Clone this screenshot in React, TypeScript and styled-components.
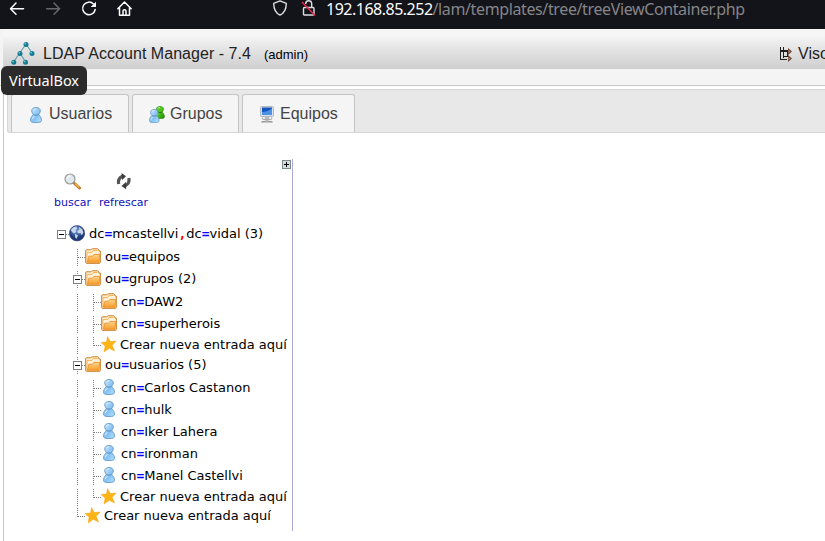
import React from "react";
import styled, { createGlobalStyle } from "styled-components";

const GlobalStyle = createGlobalStyle`
  * { box-sizing: border-box; }
  body { margin: 0; background: #fff; overflow: hidden; font-family: "Liberation Sans", Arial, sans-serif; }
  svg { display: block; flex: none; }
`;

const Page = styled.div`
  width: 825px;
  height: 541px;
  overflow: hidden;
  position: relative;
  background: #fff;
`;

const BrowserBar = styled.div`
  height: 29px;
  background: #131419;
  display: flex;
  align-items: flex-start;
  padding-left: 8px;
  color: #fbfbfe;
`;

const BarIcon = styled.div<{ $gap: number }>`
  margin-right: ${(p) => p.$gap}px;
`;

const Address = styled.div`
  display: flex;
  font: 16px/19px "Noto Sans", sans-serif;
  white-space: nowrap;
`;
const Host = styled.span`
  letter-spacing: -0.5px;
`;
const Path = styled.span`
  color: #858589;
  letter-spacing: -0.38px;
`;

const Header = styled.header`
  height: 57px;
  background: #f4f4f4;
  border-bottom: 1px solid #c6c6c6;
  padding-left: 3px;
`;
const HeaderBar = styled.div`
  height: 40px;
  background: linear-gradient(#f6f6f6 15%, #e4e4e4 50%, #cfcfcf);
  display: flex;
  align-items: center;
  padding: 9px 0 0 8px;
  color: #222;
  font-size: 16px;
  white-space: nowrap;
`;
const Title = styled.span`
  margin-left: 8px;
  width: 221px;
  letter-spacing: 0.04px;
`;
const Account = styled.span`
  font-size: 13px;
  color: #000;
  flex: 1;
  padding-top: 2px;
`;
const TreeLink = styled.span`
  width: 47px;
  display: flex;
  align-items: center;
  gap: 5px;
`;

const Main = styled.main`
  margin-left: 3px;
  height: 455px;
  border-left: 1px solid #c8c8c8;
  padding: 3px 0 0 3px;
`;
const Tabs = styled.nav`
  height: 44px;
  background: #e8e8e8;
  border: 1px solid #d6d6d6;
  border-right: 0;
  border-radius: 3px 0 0 3px;
  display: flex;
  align-items: flex-end;
  gap: 3px;
  padding-left: 3px;
`;
const Tab = styled.div<{ $width: number }>`
  width: ${(p) => p.$width}px;
  height: 38px;
  border: 1px solid #c4c4c4;
  border-bottom: 0;
  border-radius: 3px 3px 0 0;
  background: #f5f5f5;
  color: #444;
  font-size: 16px;
  display: flex;
  align-items: center;
  gap: 5px;
  padding-left: 16px;
`;
const TabIcon = styled.span`
  padding-top: 2px;
`;

const TreePanel = styled.section`
  width: 286px;
  height: 372px;
  margin-top: 26px;
  border-right: 1px solid #aaaad2;
  font-family: "DejaVu Sans", sans-serif;
  font-size: 13px;
  color: #000;
`;
const PanelTop = styled.div`
  display: flex;
  justify-content: flex-end;
  padding: 1px 1px 0 0;
`;
const Tools = styled.div`
  display: flex;
  gap: 8px;
  padding-left: 47px;
  margin-top: 4px;
  height: 50px;
`;
const Tool = styled.div`
  display: flex;
  flex-direction: column;
  align-items: center;
  color: #1111b8;
  font-size: 11px;
  line-height: 15px;
  gap: 5px;
`;
const Row = styled.div<{ $height: number }>`
  display: flex;
  height: ${(p) => p.$height}px;
  padding-left: 46px;
  white-space: nowrap;
`;
const Label = styled.span<{ $link?: boolean }>`
  line-height: 22px;
  height: 22px;
  margin-left: ${(p) => (p.$link ? 3 : 4)}px;
`;
const Equals = styled.span`
  color: #0000ff;
  font-family: "DejaVu Sans Mono", monospace;
  font-weight: bold;
  line-height: 1;
`;
const Comma = styled(Equals)`
  color: #ff0000;
`;
const IconSlot = styled.span`
  padding-top: 2px;
`;

const Tooltip = styled.div`
  position: absolute;
  left: 1px;
  top: 66px;
  width: 86px;
  height: 29px;
  border-radius: 6px;
  background: #2b2b2b;
  color: #fff;
  font: 14.5px/29px "Noto Sans", sans-serif;
  text-align: center;
`;

const User = ({ size = 16, green = false }: { size?: number; green?: boolean }) => (
  <svg width={size} height={size} viewBox="0 0 16 16">
    <defs>
      <linearGradient id={green ? "ug" : "ub"} x1="0" y1="0" x2="1" y2="1">
        <stop offset="0" stopColor={green ? "#78df37" : "#d4ecff"} />
        <stop offset=".55" stopColor={green ? "#43bd13" : "#85c1f2"} />
        <stop offset="1" stopColor={green ? "#238500" : "#b6e2ff"} />
      </linearGradient>
    </defs>
    <path
      d="M8 .5C5.400.5 3.700 1.700 3.700 3.800C3.700 5.600 5 6.700 5.200 7.400C5.200 8.400 2.500 9.400 2.500 13.200C2.500 15 4.300 15.600 8 15.600S13.500 15 13.500 13.200C13.500 9.400 10.800 8.400 10.800 7.400C11 6.700 12.300 5.600 12.300 3.800C12.300 1.700 10.600.5 8 .5Z"
      fill={`url(#${green ? "ug" : "ub"})`}
      stroke={green ? "#37901c" : "#6298c7"}
      strokeWidth=".9"
    />
    <path d="M5.400 7.500Q8 8.700 10.600 7.500" fill="none" stroke={green ? "#237a0b" : "#5c94c6"} strokeWidth="1.200" />
    <path d="M4.200 12Q4.800 10 6.400 9.600M5.400 2.800Q6.300 1.700 8 1.900" fill="none" stroke="#fff" strokeOpacity=".6" />
  </svg>
);

const Group = () => (
  <svg width="16" height="17" viewBox="0 0 16 17">
    <svg x="5" y="0" width="12" height="13" viewBox="1 0 14 16"><User green /></svg>
    <svg x="-1" y="3" width="12.500" height="14" viewBox="1 0 14 16"><User /></svg>
  </svg>
);

const Computer = () => (
  <svg width="16" height="17" viewBox="0 0 16 17">
    <rect x="1.500" y=".5" width="13" height="10" rx=".8" fill="#dce1e8" stroke="#b3b8c2" />
    <rect x="3" y="1.500" width="10" height="7.500" fill="#1655bd" />
    <path d="M3 6Q8 6.500 13 2.500V9H3Z" fill="#4d91e6" />
    <path d="M6 11H10L10.500 13H5.500Z" fill="#bbb" />
    <path d="M3.500 11.500Q2 13.500 5 13.500H11Q14 13.500 12.500 11.500" fill="none" stroke="#aaa" />
    <path d="M2.500 16Q8 13.500 13.500 16Z" fill="#ddd" stroke="#888" strokeWidth=".8" />
  </svg>
);

const Folder = () => (
  <svg width="16" height="17" viewBox="0 0 16 17">
    <defs>
      <linearGradient id="fold" x1="0" y1="0" x2="0" y2="1">
        <stop offset="0" stopColor="#ffd48b" />
        <stop offset="1" stopColor="#f69d29" />
      </linearGradient>
    </defs>
    <path d="M.7 14.200V2.800Q.7 1.800 1.500 1.800H5.500L6.500 1.300Q6.800.8 7.500.8H12.500Q13.300.8 13.500 1.500L14.200 3H15.300V14.200Q15.300 15.300 14.200 15.300H1.800Q.7 15.300.7 14.200Z" fill="#fff1d8" stroke="#c97a1d" />
    <path d="M2 13.500V4.500H6.800L8 2.500H12.500" fill="none" stroke="#f9b65b" />
    <path d="M3.800 8.200H7.500L8.800 6.500H14.600L14 14.300H2.300Z" fill="url(#fold)" stroke="#e88c22" strokeWidth=".8" />
  </svg>
);

const Star = () => (
  <svg width="16" height="18" viewBox="0 0 16 18">
    <path d="M6.600.6L9.200 5.600L15.200 5L11.200 9.200L13.500 15L8.300 12.300L3.100 16L4.100 10.100L0 6.500L5.500 6Z" fill="#fdb515" stroke="#f5a00f" strokeWidth=".5" />
  </svg>
);

const Globe = () => (
  <svg width="16" height="17" viewBox="0 0 16 17">
    <defs>
      <radialGradient id="gl" cx=".45" cy=".3">
        <stop offset="0" stopColor="#829ccb" />
        <stop offset=".55" stopColor="#4868a9" />
        <stop offset="1" stopColor="#20387a" />
      </radialGradient>
    </defs>
    <circle cx="8" cy="8.200" r="7.700" fill="url(#gl)" stroke="#2a4078" strokeWidth=".6" />
    <path d="M1.800 5Q4 1.500 7.500 1.500L8 3.500L6.500 5L7 7L5 8.500L3 7ZM10 2L13.300 4.300L14.500 7.500L12.800 10.500L11.500 8.200L9 8.200L8.300 6.200L10.200 4.800ZM6 8.800L9 10.500L7.500 14L6 12Z" fill="#dce7f5" fillOpacity=".85" />
  </svg>
);

type Branch = "line" | "tee" | "end" | "minus" | "root" | "blank";

const Connector = ({ kind }: { kind: Branch }) => (
  <svg width="16" height="22" viewBox="0 0 16 22" fill="none" stroke="#808080" strokeDasharray="1 1" shapeRendering="crispEdges">
    {(kind === "line" || kind === "tee" || kind === "minus") && <path d="M8.500 3V20" />}
    {kind === "end" && <path d="M8.500 3V12" />}
    {(kind === "tee" || kind === "end" || kind === "minus" || kind === "root") && <path d="M9 11.500H16" />}
    {(kind === "minus" || kind === "root") && (
      <g strokeDasharray="none">
        <rect x="4.500" y="7.500" width="8" height="8" fill="#fff" stroke="#808080" />
        <path d="M6 11.500H11" stroke="#000" />
      </g>
    )}
  </svg>
);

type Node = { h: number; branches: Branch[]; icon: "globe" | "folder" | "user" | "star"; text: string };

const nodes: Node[] = [
  { h: 23, branches: ["root"], icon: "globe", text: "dc=mcastellvi,dc=vidal (3)" },
  { h: 22, branches: ["blank", "tee"], icon: "folder", text: "ou=equipos" },
  { h: 23, branches: ["blank", "minus"], icon: "folder", text: "ou=grupos (2)" },
  { h: 22, branches: ["blank", "line", "tee"], icon: "folder", text: "cn=DAW2" },
  { h: 21, branches: ["blank", "line", "tee"], icon: "folder", text: "cn=superherois" },
  { h: 20, branches: ["blank", "line", "end"], icon: "star", text: "Crear nueva entrada aquí" },
  { h: 23, branches: ["blank", "minus"], icon: "folder", text: "ou=usuarios (5)" },
  { h: 22, branches: ["blank", "line", "tee"], icon: "user", text: "cn=Carlos Castanon" },
  { h: 22, branches: ["blank", "line", "tee"], icon: "user", text: "cn=hulk" },
  { h: 22, branches: ["blank", "line", "tee"], icon: "user", text: "cn=Iker Lahera" },
  { h: 22, branches: ["blank", "line", "tee"], icon: "user", text: "cn=ironman" },
  { h: 21, branches: ["blank", "line", "tee"], icon: "user", text: "cn=Manel Castellvi" },
  { h: 19, branches: ["blank", "line", "end"], icon: "star", text: "Crear nueva entrada aquí" },
  { h: 22, branches: ["blank", "end"], icon: "star", text: "Crear nueva entrada aquí" },
];

const icons = { globe: <Globe />, folder: <Folder />, user: <User />, star: <Star /> };

const EntryText = ({ text }: { text: string }) => (
  <>
    {text.split(/([=,])/).map((part, i) =>
      part === "=" ? <Equals key={i}>=</Equals> : part === "," ? <Comma key={i}>,</Comma> : part
    )}
  </>
);

export default function App() {
  return (
    <Page>
      <GlobalStyle />
      <BrowserBar>
        <BarIcon $gap={20}>
          <svg width="18" height="18" viewBox="0 0 18 18" fill="none" stroke="#fbfbfe" strokeWidth="1.500" strokeLinecap="round" strokeLinejoin="round"><path d="M15.500 8.700H2.700M8 3L2.500 8.700L8 14.300" /></svg>
        </BarIcon>
        <BarIcon $gap={17}>
          <svg width="18" height="18" viewBox="0 0 18 18" fill="none" stroke="#66666b" strokeWidth="1.500" strokeLinecap="round" strokeLinejoin="round"><path d="M.7 8.700H13.300M8 3L13.500 8.700L8 14.300" /></svg>
        </BarIcon>
        <BarIcon $gap={17}>
          <svg width="18" height="18" viewBox="0 0 18 18" fill="none" stroke="#fbfbfe" strokeWidth="1.500" strokeLinecap="round"><path d="M12.500 4A6.300 6.300 0 1 0 14.200 9.500" /><path d="M15 1.700V7H9.700Z" fill="#fbfbfe" stroke="none" /></svg>
        </BarIcon>
        <BarIcon $gap={138}>
          <svg width="18" height="18" viewBox="0 0 18 18" fill="none" stroke="#fbfbfe" strokeWidth="1.500" strokeLinejoin="round" strokeLinecap="round"><path d="M1.800 8.700L8.500 2L15.200 8.700M3.500 7.500V15.300H13.500V7.500M7 15V11Q7 9.700 8.500 9.700T10 11V15" /></svg>
        </BarIcon>
        <BarIcon $gap={11}>
          <svg width="18" height="18" viewBox="0 0 18 18" fill="none" stroke="#ddd" strokeWidth="1.400" strokeLinejoin="round"><path d="M8 .8L14.300 3.300C14.300 9 12.500 13 8 15.200C3.500 13 1.700 9 1.700 3.300Z" /></svg>
        </BarIcon>
        <BarIcon $gap={9}>
          <svg width="16" height="18" viewBox="0 0 16 18" fill="none" stroke="#ddd" strokeWidth="1.400"><rect x="2.500" y="7.500" width="10.500" height="7.500" rx="1" /><path d="M4.700 4V3.500Q5 .8 7.700.8T10.700 3.500V7.500" /><path d="M1 2L14 15.500" stroke="#e52650" strokeWidth="1.500" /></svg>
        </BarIcon>
        <Address><Host>192.168.85.252</Host><Path>/lam/templates/tree/treeViewContainer.php</Path></Address>
      </BrowserBar>
      <Header>
        <HeaderBar>
          <svg width="24" height="24" viewBox="0 0 24 24">
            <path d="M15 2L2.500 20M15 2L21 11M9 11L14.500 20" stroke="#669fae" strokeWidth="1.200" fill="none" />
            {[[15, 2.5], [9, 11.5], [21, 11.5], [2.8, 20.3], [14.5, 20.3]].map(([x, y]) => (
              <g key={`${x}-${y}`}><circle cx={x} cy={y} r="2.500" fill="#137b91" /><circle cx={x - 0.7} cy={y - 0.8} r=".9" fill="#65c1d0" /></g>
            ))}
          </svg>
          <Title>LDAP Account Manager - 7.4</Title>
          <Account>(admin)</Account>
          <TreeLink>
            <svg width="15" height="16" viewBox="0 0 15 16" shapeRendering="crispEdges">
              <path d="M2.500 1V13.500H9M5.500 1V12M2 5H10M5 10.500H11M9.500 4V11" fill="none" stroke="#1f1f1f" strokeWidth="1.300" />
              <path d="M10 2L14 5.500L10 9ZM10 9L14 12.500L10 16Z" fill="#6d4638" shapeRendering="auto" />
              <path d="M10.500 4L12.300 5.500L10.500 7ZM10.500 11L12.300 12.500L10.500 14Z" fill="#bb8a75" shapeRendering="auto" />
            </svg>
            Visor
          </TreeLink>
        </HeaderBar>
      </Header>
      <Main>
        <Tabs>
          <Tab $width={118}><TabIcon><User /></TabIcon>Usuarios</Tab>
          <Tab $width={107}><TabIcon><Group /></TabIcon>Grupos</Tab>
          <Tab $width={113}><TabIcon><Computer /></TabIcon>Equipos</Tab>
        </Tabs>
        <TreePanel>
          <PanelTop>
            <svg width="9" height="9" viewBox="0 0 9 9" shapeRendering="crispEdges"><rect x=".5" y=".5" width="8" height="8" fill="#d5dcdc" stroke="#7c8b8b" /><path d="M2 4.500H7M4.500 2V7" stroke="#000" /></svg>
          </PanelTop>
          <Tools>
            <Tool>
              <svg width="17" height="17" viewBox="0 0 17 17"><path d="M10 10L15.500 15" stroke="#bb7526" strokeWidth="3" strokeLinecap="round" /><path d="M11 10.500L15.300 14.500" stroke="#f4b456" strokeWidth="1.400" /><circle cx="6" cy="6" r="5" fill="#dfe9ed" stroke="#999" strokeWidth="1.200" /><path d="M3 6Q3 3 6 3" stroke="#fff" fill="none" /></svg>
              buscar
            </Tool>
            <Tool>
              <svg width="16" height="17" viewBox="0 0 16 17" fill="none" stroke="#555" strokeWidth="3.200">
                <path d="M2.700 11Q1.500 5.500 6.500 3.200M12.800 5Q14 10.500 9 12.800" />
                <path d="M5.500 0L10 3.200L6.200 7ZM10 9L5.500 13L10.200 16.200Z" fill="#3c3c3c" stroke="none" />
              </svg>
              refrescar
            </Tool>
          </Tools>
          {nodes.map((node, i) => (
            <Row key={i} $height={node.h}>
              {node.branches.map((b, j) => <Connector key={j} kind={b} />)}
              <IconSlot>{icons[node.icon]}</IconSlot>
              <Label $link={node.icon === "star"}><EntryText text={node.text} /></Label>
            </Row>
          ))}
        </TreePanel>
      </Main>
      <Tooltip>VirtualBox</Tooltip>
    </Page>
  );
}
